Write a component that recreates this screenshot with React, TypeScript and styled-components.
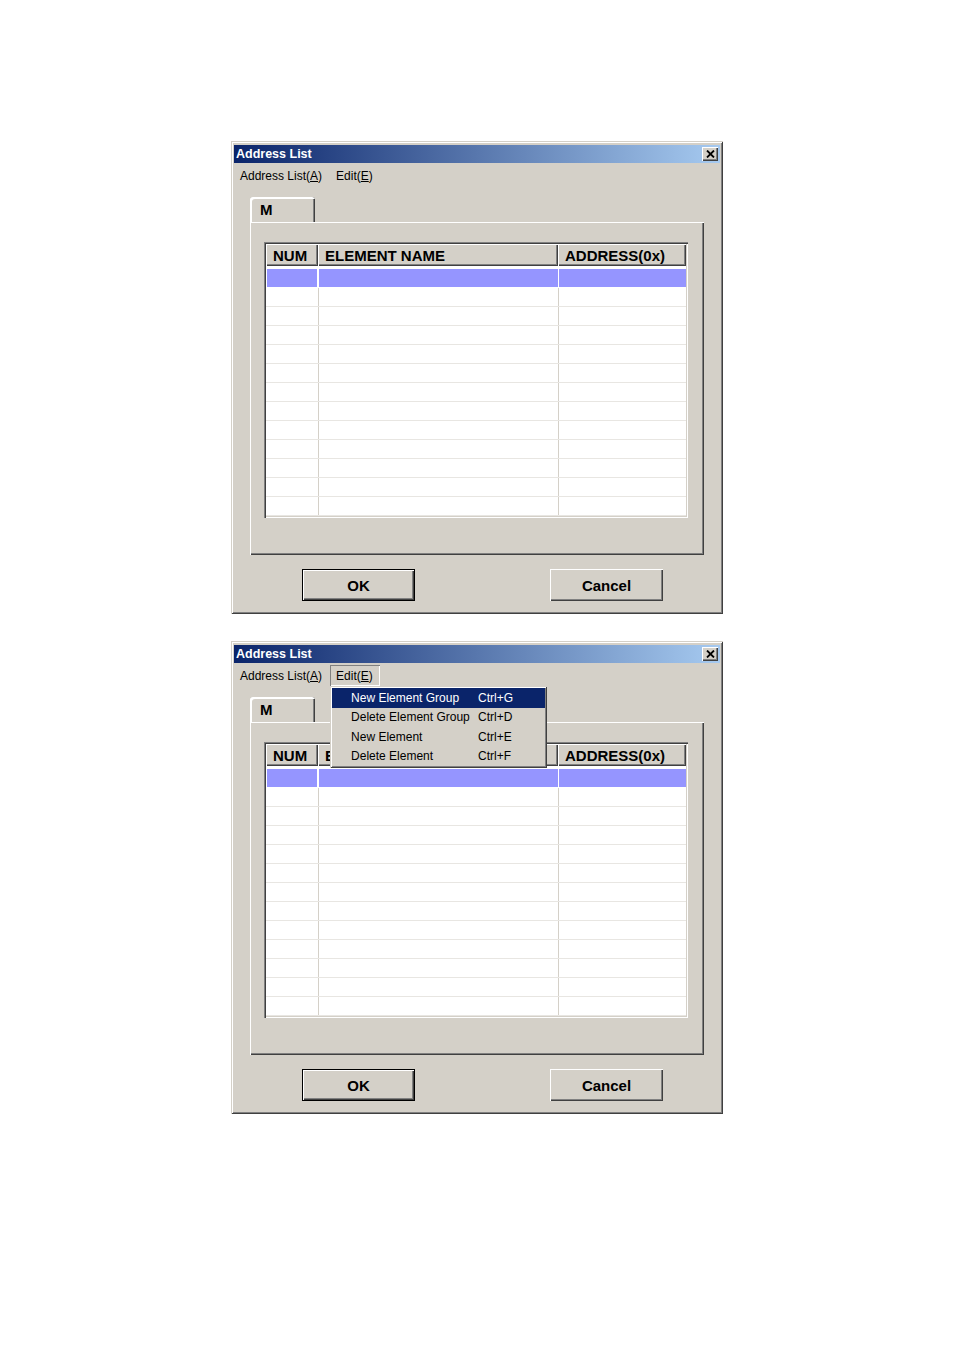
import styled, { createGlobalStyle } from 'styled-components';

const GlobalStyle = createGlobalStyle`
    body {
        margin: 0;
        background: #ffffff;
        font-family: "Liberation Sans", Arial, sans-serif;
    }
`;

const Page = styled.div`
    display: flex;
    flex-direction: column;
    align-items: center;
    gap: 27px;
    padding-top: 141px;
    min-height: 1350px;
    box-sizing: border-box;
`;

const Window = styled.div`
    width: 492px;
    height: 473px;
    box-sizing: border-box;
    background: #d4d0c8;
    padding: 4px 3px 3px 3px;
    display: flex;
    flex-direction: column;
    box-shadow: inset 1px 1px 0 #d4d0c8, inset -1px -1px 0 #404040,
        inset 2px 2px 0 #ffffff, inset -2px -2px 0 #808080;
`;

const TitleBar = styled.div`
    height: 18px;
    display: flex;
    align-items: center;
    justify-content: space-between;
    padding: 0 2px 0 2px;
    background: linear-gradient(to right, #0a246a, #a6caf0);
    color: #ffffff;
    font-weight: bold;
    font-size: 12.5px;
`;

const CloseButton = styled.div`
    width: 16px;
    height: 14px;
    background: #d4d0c8;
    display: flex;
    align-items: center;
    justify-content: center;
    box-shadow: inset 1px 1px 0 #ffffff, inset -1px -1px 0 #404040,
        inset -2px -2px 0 #808080;
`;

const MenuBar = styled.div`
    height: 21px;
    margin-top: 2px;
    display: flex;
    align-items: stretch;
    font-size: 12px;
    color: #000;
`;

const MenuItem = styled.div<{ $open?: boolean }>`
    position: relative;
    display: flex;
    align-items: center;
    padding: 0 7px 0 6px;
    margin-right: 1px;
    box-shadow: ${(p) => (p.$open ? 'inset 1px 1px 0 #808080, inset -1px -1px 0 #ffffff' : 'none')};
`;

const Underline = styled.span`
    text-decoration: underline;
`;

const DropDown = styled.div`
    position: absolute;
    left: 0;
    top: 21px;
    width: 217px;
    height: 82px;
    box-sizing: border-box;
    padding: 2px;
    display: flex;
    flex-direction: column;
    background: #d4d0c8;
    box-shadow: inset 1px 1px 0 #d4d0c8, inset -1px -1px 0 #404040,
        inset 2px 2px 0 #ffffff, inset -2px -2px 0 #808080;
    z-index: 10;
`;

const DropItem = styled.div<{ $active?: boolean }>`
    flex: 1;
    display: flex;
    align-items: center;
    padding-left: 19px;
    background: ${(p) => (p.$active ? '#0a246a' : 'transparent')};
    color: ${(p) => (p.$active ? '#ffffff' : '#000000')};
    font-size: 12px;
`;

const DropLabel = styled.span`
    width: 127px;
    white-space: nowrap;
`;

const Body = styled.div`
    flex: 1;
    display: flex;
    flex-direction: column;
    padding: 11px 16px 0 16px;
`;

const TabStrip = styled.div`
    height: 25px;
    display: flex;
    align-items: flex-end;
`;

const Tab = styled.div`
    width: 65px;
    height: 25px;
    box-sizing: border-box;
    padding: 4px 0 0 10px;
    font-size: 15px;
    font-weight: bold;
    color: #000;
    border-top-left-radius: 3px;
    border-top-right-radius: 3px;
    box-shadow: inset 2px 2px 0 #ffffff, inset -1px 0 0 #404040, inset -2px 0 0 #808080;
`;

const Panel = styled.div`
    height: 333px;
    box-sizing: border-box;
    padding: 20px 16px 0 14px;
    box-shadow: inset 1px 1px 0 #ffffff, inset -1px -1px 0 #404040,
        inset -2px -2px 0 #808080;
`;

const Table = styled.div`
    height: 276px;
    box-sizing: border-box;
    padding: 2px;
    background: #ffffff;
    display: flex;
    flex-direction: column;
    box-shadow: inset 1px 1px 0 #808080, inset 2px 2px 0 #404040,
        inset -1px -1px 0 #ffffff, inset -2px -2px 0 #d4d0c8;
`;

const HeaderRow = styled.div`
    display: grid;
    grid-template-columns: 52px 240px 128px;
    height: 22px;
`;

const HeaderCell = styled.div`
    background: #d4d0c8;
    display: flex;
    align-items: center;
    padding-left: 7px;
    font-size: 15px;
    font-weight: bold;
    color: #000;
    white-space: nowrap;
    overflow: hidden;
    box-shadow: inset 1px 1px 0 #ffffff, inset -1px -1px 0 #404040,
        inset -2px -2px 0 #808080;
`;

const Rows = styled.div`
    flex: 1;
    display: flex;
    flex-direction: column;
    padding-top: 3px;
`;

const Row = styled.div<{ $selected?: boolean }>`
    flex: 1;
    display: grid;
    grid-template-columns: 52px 240px 128px;
    border-bottom: 1px solid ${(p) => (p.$selected ? '#ffffff' : '#e8e6e2')};
`;

const Cell = styled.div<{ $selected?: boolean; $first?: boolean }>`
    background: ${(p) => (p.$selected ? '#9595ff' : '#ffffff')};
    margin-left: ${(p) => (p.$first ? '1px' : '0')};
    margin-right: ${(p) => (p.$first ? '1px' : '0')};
    border-left: ${(p) => (p.$first ? 'none' : `1px solid ${p.$selected ? '#ffffff' : '#d4d0c8'}`)};
`;

const Buttons = styled.div`
    display: flex;
    justify-content: space-between;
    padding: 14px 41px 0 52px;
`;

const Button = styled.div<{ $default?: boolean }>`
    width: 113px;
    height: 32px;
    display: flex;
    align-items: center;
    justify-content: center;
    font-size: 15px;
    font-weight: bold;
    color: #000;
    box-shadow: ${(p) =>
        p.$default
            ? 'inset 0 0 0 1px #000000, inset 2px 2px 0 #ffffff, inset -2px -2px 0 #404040, inset -3px -3px 0 #808080'
            : 'inset 1px 1px 0 #ffffff, inset -1px -1px 0 #404040, inset -2px -2px 0 #808080'};
`;

const columns = ['NUM', 'ELEMENT NAME', 'ADDRESS(0x)'];
const rows = Array.from({ length: 13 }, (_, i) => i);
const editItems = [
    ['New Element Group', 'Ctrl+G'],
    ['Delete Element Group', 'Ctrl+D'],
    ['New Element', 'Ctrl+E'],
    ['Delete Element', 'Ctrl+F'],
];

const CloseIcon = () => (
    <svg width="9" height="8" viewBox="0 0 9 8">
        <path d="M1 0.5 L8 7.5 M8 0.5 L1 7.5" stroke="#000" strokeWidth="1.8" />
    </svg>
);

const AddressWindow = ({ menuOpen }: { menuOpen?: boolean }) => {
    return (
        <Window>
            <TitleBar>
                <span>Address List</span>
                <CloseButton>
                    <CloseIcon />
                </CloseButton>
            </TitleBar>
            <MenuBar>
                <MenuItem>
                    <span>Address List(<Underline>A</Underline>)</span>
                </MenuItem>
                <MenuItem $open={menuOpen}>
                    <span>Edit(<Underline>E</Underline>)</span>
                    {menuOpen && (
                        <DropDown>
                            {editItems.map(([label, key], i) => (
                                <DropItem key={label} $active={i === 0}>
                                    <DropLabel>{label}</DropLabel>
                                    <span>{key}</span>
                                </DropItem>
                            ))}
                        </DropDown>
                    )}
                </MenuItem>
            </MenuBar>
            <Body>
                <TabStrip>
                    <Tab>M</Tab>
                </TabStrip>
                <Panel>
                    <Table>
                        <HeaderRow>
                            {columns.map((c) => (
                                <HeaderCell key={c}>{c}</HeaderCell>
                            ))}
                        </HeaderRow>
                        <Rows>
                            {rows.map((r) => (
                                <Row key={r} $selected={r === 0}>
                                    {columns.map((c, i) => (
                                        <Cell key={c} $selected={r === 0} $first={i === 0} />
                                    ))}
                                </Row>
                            ))}
                        </Rows>
                    </Table>
                </Panel>
                <Buttons>
                    <Button $default>OK</Button>
                    <Button>Cancel</Button>
                </Buttons>
            </Body>
        </Window>
    );
};

const App = () => {
    return (
        <>
            <GlobalStyle />
            <Page>
                <AddressWindow />
                <AddressWindow menuOpen />
            </Page>
        </>
    );
};

export default App;
